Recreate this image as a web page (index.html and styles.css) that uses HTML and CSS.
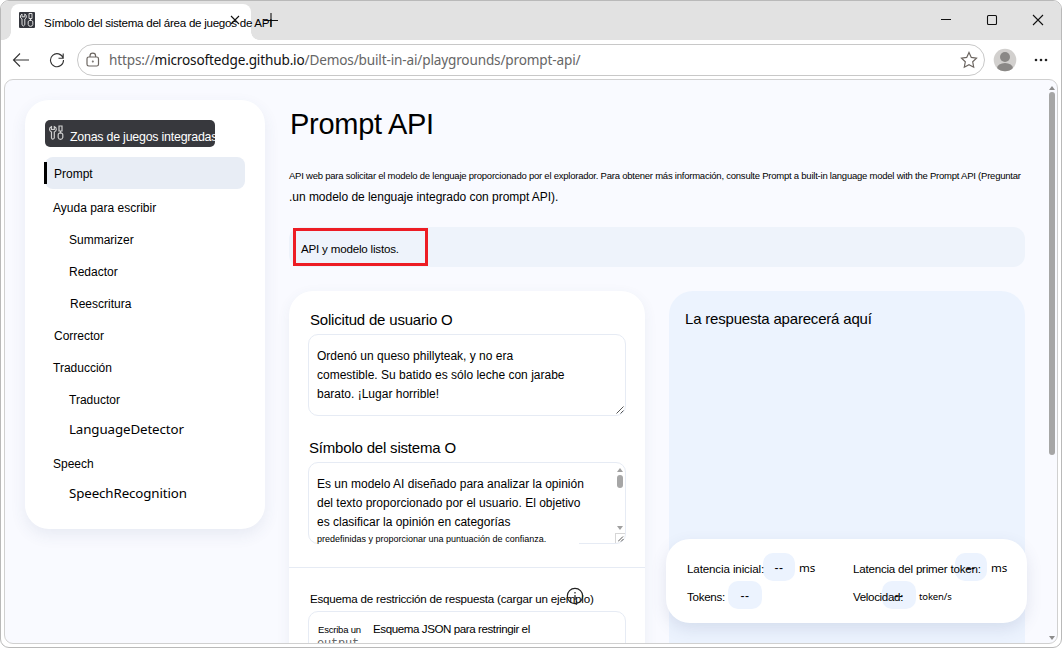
FILE: index.html
```html
<!DOCTYPE html>
<html lang="es">

<head>
    <meta charset="UTF-8">
    <meta name="viewport" content="width=device-width, initial-scale=1.0">
    <title>Prompt API</title>
    <link rel="stylesheet" href="styles.css">
</head>

<body>
    <div class="window">
        <header class="tabstrip">
            <div class="tab">
                <svg class="favicon" width="16" height="16" viewBox="0 0 16 16">
                    <rect width="16" height="16" rx="1" fill="#34363d" />
                    <g fill="none" stroke="#dedede" stroke-width="1">
                        <path d="M3 2Q1.200 3 1.400 5q.3 1.400 1.600 2v5.800q1.400 2.400 2.800 0V7q1.500-.8 1.600-2.200.1-1.800-1.600-2.800v2.800H3z" />
                        <path d="M10 1.500h3v5h-3zM11.500 6.500v2M10.200 8.500h2.600q1 .5 1 1.500v2.500q-.4 1.900-2.300 1.900t-2.300-1.900V10q0-1 1-1.500z" />
                    </g>
                </svg>
                <span class="tab-title">Símbolo del sistema del área de juegos de API</span>
                <svg class="tab-close" width="10" height="10" viewBox="0 0 10 10"><path d="M1 1l8 8M9 1L1 9" /></svg>
            </div>
            <svg class="tab-new" width="14" height="14" viewBox="0 0 14 14"><path d="M7 0v14M0 7.500h14" /></svg>
            <div class="window-buttons">
                <svg width="12" height="12" viewBox="0 0 12 12"><path d="M1 5.500h10" /></svg>
                <svg width="12" height="12" viewBox="0 0 12 12"><rect x="1.500" y="1.500" width="9" height="9" rx="1" /></svg>
                <svg width="12" height="12" viewBox="0 0 12 12"><path d="M1 1l10 10M11 1L1 11" /></svg>
            </div>
        </header>

        <div class="toolbar">
            <svg class="back" width="18" height="16" viewBox="0 0 18 16"><path d="M17 8H1.500M8 1.500L1.500 8L8 14.500" /></svg>
            <svg class="reload" width="16" height="16" viewBox="0 0 16 16"><path d="M14.200 6.200A6.500 6.500 0 1 0 14.500 8M14.200 1.500v4.700H9.500" /></svg>
            <div class="address">
                <svg class="lock" width="14" height="16" viewBox="0 0 14 16">
                    <rect x="1" y="5" width="11.500" height="9" rx="1.800" />
                    <path d="M4 5V4a2.800 2.800 0 0 1 5.600 0v1" />
                    <circle cx="6.800" cy="9.500" r=".4" />
                </svg>
                <span class="url">https://<b>microsoftedge.github.io</b>/Demos/built-in-ai/playgrounds/prompt-api/</span>
                <svg class="star" width="18" height="18" viewBox="0 0 18 18"><path d="M9 1.500l2.300 4.900 5.200.7-3.800 3.700 1 5.400L9 13.600l-4.700 2.600 1-5.400L1.500 7.100l5.200-.7z" /></svg>
            </div>
            <svg class="avatar" width="24" height="24" viewBox="0 0 24 24">
                <defs><clipPath id="round"><circle cx="12" cy="12" r="11.300" /></clipPath></defs>
                <circle cx="12" cy="12" r="11.300" fill="#d2d0ce" />
                <g fill="#8a8886" clip-path="url(#round)">
                    <circle cx="12" cy="9" r="5" />
                    <ellipse cx="12" cy="20.500" rx="8" ry="5.500" />
                </g>
            </svg>
            <svg class="more" width="14" height="4" viewBox="0 0 14 4"><circle cx="2" cy="2" r="1.300" /><circle cx="7" cy="2" r="1.300" /><circle cx="12" cy="2" r="1.300" /></svg>
        </div>

        <div class="page">
            <nav class="sidebar">
                <div class="brand">
                    <svg width="16" height="18" viewBox="0 0 16 18">
                        <g fill="none" stroke="#cfcfcf" stroke-width="1.200">
                            <path d="M3.500 2.500Q1.300 3.300 1.500 5.500q.3 1.700 2 2.500v6q1.300 2.400 2.800 0V8q1.800-.9 2-2.500.2-2.200-2-3v3H3.500z" />
                            <path d="M11 2h3v5h-3zM12.500 7v2M11.200 9.200h2.600q1 .5 1 1.500v2.800q-.4 1.900-2.300 1.900t-2.300-1.900v-2.800q0-1 1-1.500z" />
                        </g>
                    </svg>
                    <span>Zonas de juegos integradas</span>
                </div>
                <ul class="menu">
                    <li class="active">Prompt</li>
                    <li>Ayuda para escribir</li>
                    <li class="sub">Summarizer</li>
                    <li class="sub">Redactor</li>
                    <li class="sub shift">Reescritura</li>
                    <li class="shift">Corrector</li>
                    <li>Traducción</li>
                    <li class="sub">Traductor</li>
                    <li class="sub ui">LanguageDetector</li>
                    <li>Speech</li>
                    <li class="sub ui">SpeechRecognition</li>
                </ul>
            </nav>

            <main>
                <h1>Prompt API</h1>
                <p class="intro">API web para solicitar el modelo de lenguaje proporcionado por el explorador. Para obtener más información, consulte Prompt a built-in language model with the Prompt API (Preguntar</p>
                <p class="intro-rest">.un modelo de lenguaje integrado con prompt API).</p>

                <div class="status"><span class="status-box">API y modelo listos.</span></div>

                <div class="columns">
                    <section class="card">
                        <div class="fields">
                            <label class="field-label">Solicitud de usuario O</label>
                            <div class="field">
                                <div>Ordenó un queso phillyteak, y no era</div>
                                <div>comestible. Su batido es sólo leche con jarabe</div>
                                <div>barato. ¡Lugar horrible!</div>
                                <svg class="grip" width="8" height="8" viewBox="0 0 8 8"><path d="M.5 7.500l7-7M4.500 7.500l3-3" /></svg>
                            </div>
                            <label class="field-label second">Símbolo del sistema O</label>
                            <div class="field">
                                <div>Es un modelo AI diseñado para analizar la opinión</div>
                                <div>del texto proporcionado por el usuario. El objetivo</div>
                                <div>es clasificar la opinión en categorías</div>
                                <div class="small-line">predefinidas y proporcionar una puntuación de confianza.</div>
                                <div class="field-scroll">
                                    <svg width="6" height="4" viewBox="0 0 6 4"><path d="M0 4l3-4 3 4z" /></svg>
                                    <i></i>
                                    <svg width="6" height="4" viewBox="0 0 6 4"><path d="M0 0l3 4 3-4z" /></svg>
                                </div>
                                <div class="corner"><svg width="6" height="6" viewBox="0 0 6 6"><path d="M0 5.500l5-5M3 5.500l2.500-2.500" /></svg></div>
                            </div>
                        </div>
                        <div class="fields schema">
                            <label class="schema-label">Esquema de restricción de respuesta (cargar un ejemplo)
                                <svg class="info" width="18" height="18" viewBox="0 0 18 18"><circle cx="9" cy="9" r="7.700" /><path d="M9 8v5M9 5v1.500" /></svg>
                            </label>
                            <div class="field schema-field">
                                <div class="placeholder"><span class="tiny">Escriba un</span><span class="hint">Esquema JSON para restringir el</span></div>
                                <div class="mono">output</div>
                            </div>
                        </div>
                    </section>

                    <section class="card answer">La respuesta aparecerá aquí
                        <div class="metrics">
                            <div class="metric"><span class="latency">Latencia inicial:</span><b class="pill">--</b><em>ms</em></div>
                            <div class="metric"><span class="first-token">Latencia del primer token:</span><b class="pill">--</b><em>ms</em></div>
                            <div class="metric"><span class="tokens">Tokens:</span><b class="pill wide">--</b></div>
                            <div class="metric"><span class="speed">Velocidad:</span><b class="pill wide">--</b><em class="rate">token/s</em></div>
                        </div>
                    </section>
                </div>
            </main>

            <div class="scrollbar">
                <svg width="6" height="4" viewBox="0 0 6 4"><path d="M0 4l3-4 3 4z" /></svg>
                <i></i>
                <svg class="down" width="6" height="4" viewBox="0 0 6 4"><path d="M0 0l3 4 3-4z" /></svg>
            </div>
        </div>
    </div>
</body>

</html>
```

FILE: styles.css
```css
* {
    box-sizing: border-box;
}

body {
    margin: 0;
    background-color: white;
    font-family: "Liberation Sans", Arial, sans-serif;
    font-size: 12px;
    color: #000;
    overflow: hidden;
}

svg {
    display: block;
    flex-shrink: 0;
}

p,
h1,
ul {
    margin: 0;
    padding: 0;
    font-weight: normal;
    white-space: nowrap;
}

.window {
    width: 1062px;
    height: 648px;
    border: 1px solid #b9b9b9;
    border-radius: 9px;
    background-color: white;
    overflow: hidden;
}

/* tabs */
.tabstrip {
    display: flex;
    height: 39px;
    background-color: #e2e2e2;
}

.tab {
    position: relative;
    display: flex;
    align-items: center;
    width: 240px;
    margin: 3px 0 0 10px;
    padding: 0 0 3px 8px;
    border-radius: 8px 8px 0 0;
    background-color: white;
}

.tab::before,
.tab::after {
    content: "";
    position: absolute;
    bottom: 0;
    width: 8px;
    height: 8px;
}

.tab::before {
    left: -8px;
    background: radial-gradient(circle at 0 0, #e2e2e2 7.5px, white 8px);
}

.tab::after {
    right: -8px;
    background: radial-gradient(circle at 100% 0, #e2e2e2 7.5px, white 8px);
}

.favicon {
    margin-top: -1px;
}

.tab-title {
    position: relative;
    z-index: 1;
    width: 190px;
    margin: 3px 0 0 9px;
    white-space: nowrap;
    font-size: 11.6px;
    letter-spacing: -0.27px;
}

.tab-close {
    margin: -2px 0 0 -4px;
}

.tab-close,
.tab-new,
.window-buttons svg {
    fill: none;
    stroke: #111;
    stroke-width: 1.1;
}

.tab-new {
    margin: 12px 0 0 13px;
}

.window-buttons {
    display: flex;
    gap: 34px;
    margin: 13px 17px 0 auto;
}

/* toolbar */
.toolbar {
    display: flex;
    align-items: center;
    height: 39px;
    padding: 0 13px 0 11px;
}

.toolbar svg {
    fill: none;
    stroke: #333;
    stroke-width: 1.1;
}

.toolbar .reload {
    margin-left: 19px;
}

.address {
    display: flex;
    align-items: center;
    width: 908px;
    height: 32px;
    margin: 1px 0 0 12px;
    padding: 0 6px 0 8px;
    border: 1px solid #c8c8c8;
    border-radius: 16px;
}

.toolbar .lock,
.toolbar .star {
    stroke: #6b6560;
    stroke-width: 1.2;
}

.url {
    margin: -1px auto 0 9px;
    font: 13.6px "Noto Sans", sans-serif;
    letter-spacing: -0.16px;
    color: #666;
    white-space: nowrap;
}

.url b {
    font-weight: normal;
    color: #111;
}

.toolbar .avatar {
    margin: 1px 0 0 8px;
    stroke: none;
}

.toolbar .more {
    margin: 1px 0 0 auto;
    fill: #222;
    stroke: none;
}

/* page */
.page {
    position: relative;
    display: flex;
    width: 1054px;
    height: 565px;
    margin: 0 3px;
    padding: 20px 0 0 20px;
    border: 1px solid #d0d0d0;
    border-radius: 9px;
    background-color: #f9faff;
    overflow: hidden;
}

.sidebar {
    flex-shrink: 0;
    width: 240px;
    height: 429px;
    padding: 20px;
    border-radius: 24px;
    background-color: white;
    box-shadow: 0 6px 16px rgba(60, 80, 120, 0.09);
}

.brand {
    display: flex;
    width: 170px;
    height: 27px;
    padding: 4px 0 0 3px;
    border-radius: 5px;
    background-color: #37383d;
    color: white;
    white-space: nowrap;
    overflow: hidden;
}

.brand span {
    margin: 6px 0 0 6px;
    font-size: 12.4px;
    line-height: 14px;
    letter-spacing: -0.22px;
}

.menu {
    list-style: none;
    margin-top: 10px;
}

.menu li {
    height: 32px;
    padding-left: 8px;
    line-height: 32px;
    font-size: 12px;
}

.menu .active {
    position: relative;
    margin-bottom: 3px;
    padding-left: 9px;
    border-radius: 8px;
    background-color: #e8edf5;
    line-height: 34px;
}

.menu .active::before {
    content: "";
    position: absolute;
    left: -1px;
    top: 5px;
    width: 3px;
    height: 22px;
    background-color: #000;
}

.menu .shift {
    padding-left: 9px;
}

.menu .sub {
    padding-left: 24px;
}

.menu .sub.shift {
    padding-left: 25px;
}

.menu .ui {
    font-family: "Noto Sans", sans-serif;
    font-size: 13.3px;
    line-height: 26px;
    letter-spacing: -0.1px;
}

main {
    flex-shrink: 0;
    width: 736px;
    margin-left: 24px;
}

h1 {
    height: 68px;
    padding-left: 1px;
    font-size: 29px;
    line-height: 49px;
    letter-spacing: -0.28px;
}

.intro {
    font-size: 9.5px;
    line-height: 16px;
    letter-spacing: -0.23px;
}

.intro-rest {
    margin-top: 5px;
    font-size: 12px;
    line-height: 16px;
    letter-spacing: -0.03px;
}

.status {
    height: 40px;
    margin-top: 22px;
    padding: 1px 0 0 4px;
    border-radius: 12px;
    background-color: #eef3fb;
}

.status-box {
    display: block;
    width: 135px;
    height: 38px;
    padding: 2px 0 0 5px;
    border: 3px solid #ed1c24;
    font-size: 11.6px;
    line-height: 32px;
    letter-spacing: -0.2px;
    white-space: nowrap;
}

.columns {
    display: flex;
    gap: 24px;
    margin-top: 24px;
}

.card {
    width: 356px;
    height: 420px;
    border-radius: 24px;
    background-color: white;
    box-shadow: 0 4px 14px rgba(60, 80, 120, 0.07);
}

.fields {
    padding: 18px 19px 0;
    white-space: nowrap;
}

.field-label {
    display: block;
    height: 25px;
    padding: 1px 0 0 2px;
    font-size: 15px;
    line-height: 20px;
    letter-spacing: -0.19px;
}

.field-label.second {
    margin-top: 21px;
    padding-left: 1px;
}

.field {
    position: relative;
    height: 82px;
    padding: 12px 8px;
    border: 1px solid #e6ebf4;
    border-radius: 10px;
    line-height: 19px;
}

.grip,
.corner svg {
    position: absolute;
    right: 1px;
    bottom: 1px;
    fill: none;
    stroke: #444;
    stroke-width: 0.9;
}

.small-line {
    width: 262px;
    height: 16px;
    margin: -1px 0 0;
    background-color: white;
    font-size: 9px;
    line-height: 16px;
}

.field-scroll {
    position: absolute;
    top: 5px;
    right: 1px;
    width: 7px;
    fill: #a0a0a0;
}

.field-scroll i {
    display: block;
    width: 6px;
    height: 13px;
    margin: 3px 0 38px;
    border-radius: 3px;
    background-color: #a6a6a6;
}

.corner {
    position: absolute;
    right: 0;
    bottom: 0;
    width: 10px;
    height: 10px;
    border: 1px solid #d6d6d6;
    border-width: 1px 0 0 1px;
}

.schema {
    margin-top: 23px;
    border-top: 1px solid #e6ebf4;
    padding-top: 20px;
}

.schema-label {
    position: relative;
    display: block;
    height: 23px;
    padding-left: 2px;
    font-size: 11.6px;
    line-height: 21px;
    letter-spacing: -0.21px;
}

.info {
    position: absolute;
    left: 258px;
    top: -1px;
    fill: none;
    stroke: #222;
    stroke-width: 1.2;
}

.schema-field {
    padding-top: 8px;
}

.placeholder {
    height: 18px;
    line-height: 18px;
}

.tiny {
    display: inline-block;
    width: 56px;
    padding-left: 1px;
    font-size: 9.5px;
    letter-spacing: -0.2px;
}

.hint {
    font-size: 11.6px;
    letter-spacing: -0.43px;
}

.mono {
    font: 12px/12px "Liberation Mono", monospace;
    letter-spacing: -0.2px;
    color: #666;
}

.answer {
    position: relative;
    padding: 18px 16px;
    background-color: #ecf3fe;
    box-shadow: none;
    font-size: 15px;
    line-height: 20px;
    letter-spacing: -0.19px;
    white-space: nowrap;
}

/* floating latency panel */
.metrics {
    position: absolute;
    left: -3px;
    top: 248px;
    display: grid;
    grid-template-columns: 166px 160px;
    grid-auto-rows: 28px;
    width: 361px;
    height: 84px;
    padding: 14px 0 0 21px;
    border-radius: 24px;
    background-color: white;
    box-shadow: 0 6px 16px rgba(60, 80, 120, 0.13);
    font-size: 11.6px;
    letter-spacing: -0.13px;
}

.metric {
    display: flex;
    line-height: 32px;
}

.metric span {
    position: relative;
    z-index: 1;
}

.pill {
    width: 32px;
    height: 28px;
    border-radius: 10px;
    background-color: #ecf3fe;
    font-size: 12px;
    font-weight: normal;
    line-height: 31px;
    letter-spacing: 0.5px;
    text-align: center;
}

.pill.wide {
    width: 34px;
}

.metric em {
    margin-left: 4px;
    font: 11.6px/30px "Noto Sans", sans-serif;
}

.metric .rate {
    margin-left: 3px;
    font-size: 9.5px;
    line-height: 31px;
}

.latency {
    width: 76px;
}

.metric .first-token {
    width: 102px;
    letter-spacing: -0.22px;
}

.metric .tokens {
    width: 41px;
    letter-spacing: -0.28px;
}

.metric .speed {
    width: 29px;
    letter-spacing: -0.35px;
}

/* page scrollbar */
.scrollbar {
    position: absolute;
    top: 6px;
    right: 2px;
    bottom: 3px;
    display: flex;
    flex-direction: column;
    align-items: center;
    width: 7px;
    fill: #8c8c8c;
}

.scrollbar i {
    width: 6px;
    height: 363px;
    margin-top: 2px;
    border-radius: 3px;
    background-color: #a6a6a6;
}

.scrollbar .down {
    margin-top: auto;
}
```
